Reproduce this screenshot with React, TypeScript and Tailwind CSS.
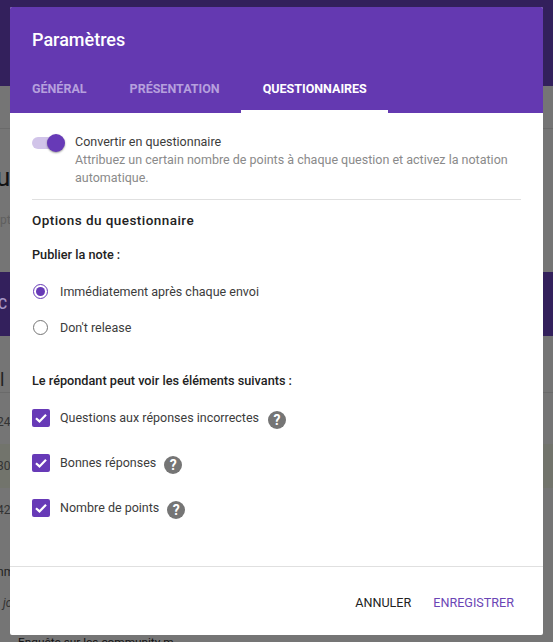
const font = { fontFamily: "Roboto, 'Liberation Sans', sans-serif" };

function Check() {
  return (
    <span className="flex h-[18px] w-[18px] shrink-0 items-center justify-center rounded-[2px] bg-[#673ab7]">
      <svg viewBox="0 0 18 18" className="h-[18px] w-[18px]" fill="none" stroke="#ffffff" strokeWidth="2.2">
        <path d="M4 9.2 L7.5 12.4 L14 5.8" />
      </svg>
    </span>
  );
}

function Help() {
  return (
    <span className="flex h-[18px] w-[18px] shrink-0 items-center justify-center rounded-full bg-[#757575] text-[14px] leading-[18px] font-bold text-white">
      ?
    </span>
  );
}

function CheckRow({ label, gap }: { label: string; gap: string }) {
  return (
    <div className="flex h-[18px] items-center">
      <Check />
      <span className="ml-[10px] text-[12.5px] text-[#3c3c3c]">{label}</span>
      <span className={`${gap} mt-[4px]`}>
        <Help />
      </span>
    </div>
  );
}

function Radio({ on, label }: { on?: boolean; label: string }) {
  return (
    <div className="flex h-[16px] items-center">
      <span
        className={`flex h-[15px] w-[15px] shrink-0 items-center justify-center rounded-full border ${
          on ? "border-[#673ab7]" : "border-[#757575]"
        } ml-[1px]`}
      >
        {on && <span className="h-[9px] w-[9px] rounded-full bg-[#673ab7]" />}
      </span>
      <span className="mt-[2px] ml-[12px] text-[12.5px] text-[#3c3c3c]">{label}</span>
    </div>
  );
}

function Background() {
  return (
    <div className="flex h-[642px] w-[553px] flex-col overflow-hidden bg-[#757575] text-[#111111]">
      <div className="h-[86px] shrink-0 bg-[#33205c]" />
      <div className="h-[43px] shrink-0 border-b border-[#6a6a6a]" />
      <div className="h-[143px] shrink-0 pt-[28px] text-[26px] leading-[40px]">
        <div className="-ml-[4px]">ui</div>
        <div className="mt-[14px] text-[12px] leading-[18px] text-[#5f5f5f]">pt</div>
      </div>
      <div className="flex h-[64px] shrink-0 items-center bg-[#33205c] text-[14px] font-medium text-[#a595c6]">
        <span className="-ml-[2px]">C</span>
      </div>
      <div className="h-[57px] shrink-0 border-b border-[#6a6a6a] pt-[34px] text-[18px] leading-[20px]">
        <span className="text-[#222222]">l</span>
      </div>
      <div className="h-[7px] shrink-0" />
      <div className="flex h-[44px] shrink-0 items-center text-[12px] text-[#333333]">
        <span className="-ml-[3px]">24</span>
      </div>
      <div className="flex h-[44px] shrink-0 items-center bg-[#72746c] text-[12px] text-[#333333]">
        <span className="-ml-[3px]">30</span>
      </div>
      <div className="flex h-[44px] shrink-0 items-center text-[12px] text-[#333333]">
        <span className="-ml-[3px]">42</span>
      </div>
      <div className="h-[53px] shrink-0 pt-[32px] text-[12px] leading-[16px] text-[#222222]">
        <span className="-ml-[3px] block">nm</span>
      </div>
      <div className="h-[35px] shrink-0 pt-[10px] text-[12px] leading-[16px] italic text-[#333333]">
        <span className="ml-[3px] block">jc</span>
      </div>
      <div className="flex h-[22px] shrink-0">
        <div className="h-full w-[187px] shrink-0 pt-[15px] pl-[18px] text-[11.8px] leading-[14px] whitespace-nowrap text-[#111111]">
          Enquête sur les community m
        </div>
      </div>
    </div>
  );
}

export default function App() {
  return (
    <div className="relative h-[642px] w-[553px] overflow-hidden" style={font}>
      <Background />
      <div className="absolute top-[7px] left-[10px] flex h-[628px] w-[533px] flex-col overflow-hidden rounded-[2px] bg-white">
        <div className="flex h-[106px] shrink-0 flex-col bg-[#6439b1] text-white">
          <div className="pt-[22px] pl-[22px] text-[18px] leading-[22px] font-medium">Paramètres</div>
          <div className="mt-auto flex pl-[1px] text-[12.5px] font-bold">
            <div className="pr-[22px] pb-[14px] pl-[21px] text-[#b6a0dd]">GÉNÉRAL</div>
            <div className="pr-[21px] pb-[14px] pl-[21px] text-[#b6a0dd]">PRÉSENTATION</div>
            <div className="border-b-[3px] border-white pr-[21px] pb-[11px] pl-[22px]">QUESTIONNAIRES</div>
          </div>
        </div>

        <div className="flex-1 px-[22px] pt-[21px]">
          <div className="flex">
            <div className="relative mt-[3px] h-[12px] w-[28px] shrink-0 rounded-full bg-[#d1c4e9]">
              <span className="absolute top-[-3px] right-[-5px] h-[18px] w-[18px] rounded-full bg-[#673ab7] shadow-[0_1px_2px_rgba(0,0,0,0.4)]" />
            </div>
            <div className="ml-[15px] text-[12.5px] leading-[18px]">
              <div className="-mt-[1px] text-[#3c3c3c]">Convertir en questionnaire</div>
              <div className="text-[#8a8a8a]">
                Attribuez un certain nombre de points à chaque question et activez la notation automatique.
              </div>
            </div>
          </div>
          <div className="mt-[12px] h-px bg-[#e0e0e0]" />

          <div className="mt-[11px] text-[13.5px] leading-[18px] font-medium tracking-[0.45px] text-[#222222]">
            Options du questionnaire
          </div>
          <div className="mt-[17px] text-[12.7px] leading-[18px] font-medium text-[#222222]">Publier la note :</div>
          <div className="mt-[19px] flex flex-col gap-[20px]">
            <Radio on label="Immédiatement après chaque envoi" />
            <Radio label="Don't release" />
          </div>
          <div className="mt-[37px] text-[12.7px] leading-[18px] font-medium text-[#222222]">
            Le répondant peut voir les éléments suivants :
          </div>
          <div className="mt-[19px] flex flex-col gap-[27px]">
            <CheckRow label="Questions aux réponses incorrectes" gap="ml-[9px]" />
            <CheckRow label="Bonnes réponses" gap="ml-[8px]" />
            <CheckRow label="Nombre de points" gap="ml-[8px]" />
          </div>
        </div>

        <div className="flex h-[69px] shrink-0 items-center justify-end gap-[22px] border-t border-[#e0e0e0] pt-[5px] pr-[29px] text-[12.6px]">
          <span className="text-[#222222]">ANNULER</span>
          <span className="text-[#6a45b5]">ENREGISTRER</span>
        </div>
      </div>
    </div>
  );
}
